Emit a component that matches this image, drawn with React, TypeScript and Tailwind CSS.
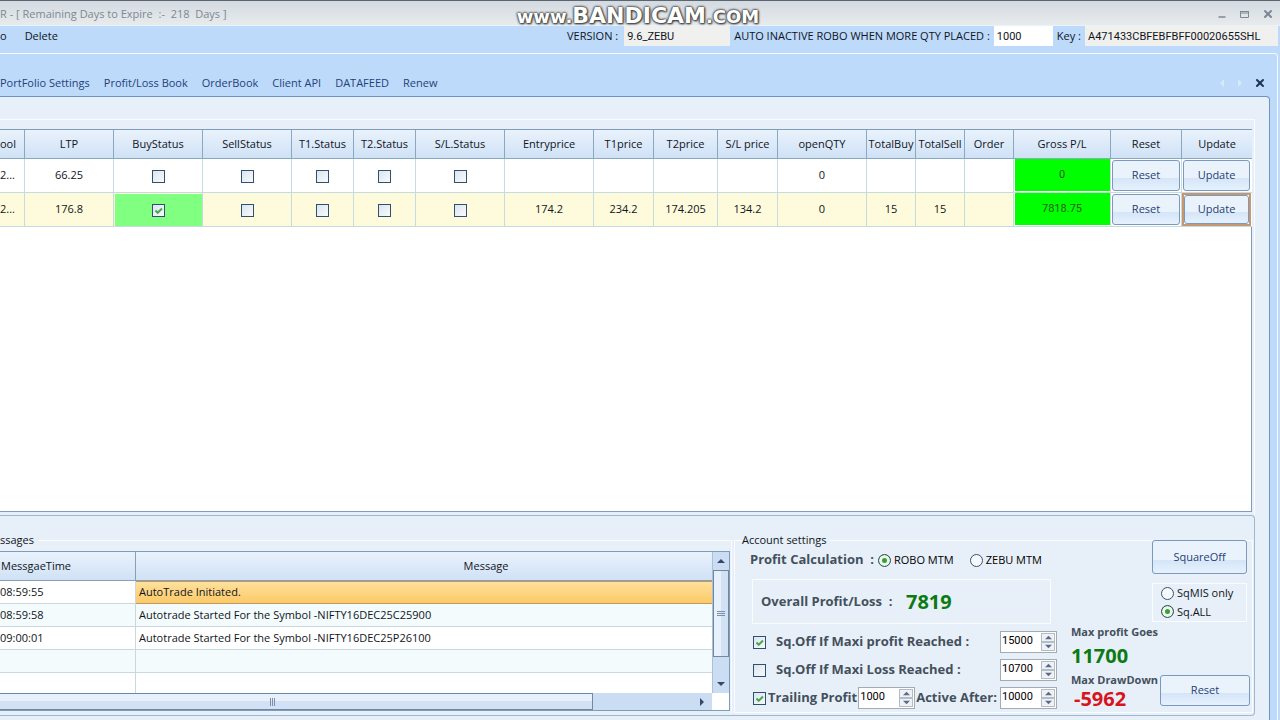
import { ReactNode } from "react";
import { Minus, X } from "lucide-react";

interface Row {
  symbol: string;
  ltp: string;
  buy: boolean;
  entry: string;
  t1: string;
  t2: string;
  sl: string;
  openQty: string;
  totalBuy: string;
  totalSell: string;
  gross: string;
  focused: boolean;
}

const TABS = [
  "PortFolio Settings",
  "Profit/Loss Book",
  "OrderBook",
  "Client API",
  "DATAFEED",
  "Renew",
];

const COLUMNS = [
  { label: "ool", width: "w-[25px]" },
  { label: "LTP", width: "w-[89px]" },
  { label: "BuyStatus", width: "w-[89px]" },
  { label: "SellStatus", width: "w-[89px]" },
  { label: "T1.Status", width: "w-[62px]" },
  { label: "T2.Status", width: "w-[62px]" },
  { label: "S/L.Status", width: "w-[89px]" },
  { label: "Entryprice", width: "w-[89px]" },
  { label: "T1price", width: "w-[60px]" },
  { label: "T2price", width: "w-[64px]" },
  { label: "S/L price", width: "w-[60px]" },
  { label: "openQTY", width: "w-[89px]" },
  { label: "TotalBuy", width: "w-[49px]" },
  { label: "TotalSell", width: "w-[49px]" },
  { label: "Order", width: "w-[49px]" },
  { label: "Gross P/L", width: "w-[97px]" },
  { label: "Reset", width: "w-[71px]" },
  { label: "Update", width: "w-[70px]" },
];

const ROWS: Row[] = [
  {
    symbol: "2...",
    ltp: "66.25",
    buy: false,
    entry: "",
    t1: "",
    t2: "",
    sl: "",
    openQty: "0",
    totalBuy: "",
    totalSell: "",
    gross: "0",
    focused: false,
  },
  {
    symbol: "2...",
    ltp: "176.8",
    buy: true,
    entry: "174.2",
    t1: "234.2",
    t2: "174.205",
    sl: "134.2",
    openQty: "0",
    totalBuy: "15",
    totalSell: "15",
    gross: "7818.75",
    focused: true,
  },
];

const MESSAGES = [
  { time: "08:59:55", text: "AutoTrade Initiated." },
  { time: "08:59:58", text: "Autotrade Started For the Symbol -NIFTY16DEC25C25900" },
  { time: "09:00:01", text: "Autotrade Started For the Symbol -NIFTY16DEC25P26100" },
  { time: "", text: "" },
  { time: "", text: "" },
];

function Arrow({ dir, className }: { dir: "up" | "down" | "left" | "right"; className: string }) {
  const points = {
    up: "0,6 4,2 8,6",
    down: "0,2 4,6 8,2",
    left: "6,0 2,4 6,8",
    right: "2,0 6,4 2,8",
  };
  return (
    <svg viewBox="0 0 8 8" className={className} fill="currentColor" aria-hidden="true">
      <polygon points={points[dir]} />
    </svg>
  );
}

function CheckBox({ id, label, checked = false }: { id?: string; label?: string; checked?: boolean }) {
  return (
    <span className="relative inline-block size-[13px] shrink-0 align-middle">
      <input
        id={id}
        type="checkbox"
        aria-label={label}
        defaultChecked={checked}
        className="peer block size-[13px] appearance-none border border-[#31506f] bg-linear-to-br from-[#dbe5ee] to-[#f8fafc]"
      />
      <svg
        viewBox="0 0 13 13"
        className="pointer-events-none absolute inset-0 hidden text-[#4ca64c] peer-checked:block"
        fill="none"
        stroke="currentColor"
        strokeWidth="2"
        aria-hidden="true"
      >
        <path d="M3.5 6.5 L5.7 8.8 L10 4.5" />
      </svg>
    </span>
  );
}

function Radio({ name, label, checked = false }: { name: string; label: string; checked?: boolean }) {
  return (
    <label className="flex items-center gap-[3px] whitespace-nowrap">
      <input
        type="radio"
        name={name}
        defaultChecked={checked}
        className="size-[13px] appearance-none rounded-full border border-[#3d5268] bg-[#f5f9fd] checked:bg-[#35a035] checked:shadow-[inset_0_0_0_3px_#eef7ee]"
      />
      {label}
    </label>
  );
}

function Spinner({ label, value }: { label: string; value: string }) {
  return (
    <div className="flex h-[22px] w-[57px] shrink-0 border border-[#a3abb5] bg-white p-px">
      <input
        aria-label={label}
        defaultValue={value}
        className="h-4 w-[39px] font-[Roboto,sans-serif] text-[11px] font-normal text-black outline-none"
      />
      <div className="flex flex-1 flex-col text-[#5d6b8c]">
        <button
          aria-label={`Increase ${label}`}
          className="flex flex-1 items-center justify-center border border-[#b4bcc6] bg-[#eef1f5]"
        >
          <Arrow dir="up" className="size-[7px]" />
        </button>
        <button
          aria-label={`Decrease ${label}`}
          className="flex flex-1 items-center justify-center border border-[#b4bcc6] bg-[#eef1f5]"
        >
          <Arrow dir="down" className="size-[7px]" />
        </button>
      </div>
    </div>
  );
}

function PushButton({ children, className }: { children: ReactNode; className: string }) {
  return (
    <button
      className={`rounded-[3px] border border-[#7b98bd] bg-linear-to-b from-[#eaf3fc] from-60% via-[#d5e5f8] via-60% to-[#e6f1fd] text-[#1e3f74] ${className}`}
    >
      {children}
    </button>
  );
}

function PositionsTable() {
  return (
    <table className="w-full table-fixed border-separate border-spacing-0 text-center">
      <thead>
        <tr className="h-[29px] bg-linear-to-b from-[#e9f2fc] to-[#cfe1f6]">
          {COLUMNS.map((col) => (
            <th
              key={col.label}
              className={`overflow-hidden border-r border-b border-[#8aa9c0] p-0 font-normal whitespace-nowrap first:text-left last:border-r-0 ${col.width}`}
            >
              {col.label}
            </th>
          ))}
        </tr>
      </thead>
      <tbody>
        {ROWS.map((row, i) => (
          <tr
            key={i}
            className={`h-[34px] *:border-r *:border-b *:border-[#c5dbe2] *:p-0 *:last:border-r-0 ${row.focused ? "bg-[#fdfbdc]" : "bg-white"}`}
          >
            <td className="text-left whitespace-nowrap">{row.symbol}</td>
            <td>{row.ltp}</td>
            <td className={row.buy ? "bg-[#80ff80] shadow-[inset_1px_1px_0_#fdfbdc]" : ""}>
              <CheckBox label="BuyStatus" checked={row.buy} />
            </td>
            {["SellStatus", "T1.Status", "T2.Status", "S/L.Status"].map((name) => (
              <td key={name}>
                <CheckBox label={name} />
              </td>
            ))}
            <td>{row.entry}</td>
            <td>{row.t1}</td>
            <td>{row.t2}</td>
            <td>{row.sl}</td>
            <td>{row.openQty}</td>
            <td>{row.totalBuy}</td>
            <td>{row.totalSell}</td>
            <td />
            <td className="bg-[#00ff00] font-[Roboto,sans-serif] text-[#28601c] shadow-[inset_1px_0_0_#fff,inset_0_-1px_0_#fff]">
              {row.gross}
            </td>
            <td className="bg-white">
              <div className="flex px-px">
                <PushButton className="h-[31px] flex-1">Reset</PushButton>
              </div>
            </td>
            <td className="bg-white">
              <div className={`mr-px flex ${row.focused ? "border-2 border-[#c8966f]" : "px-px"}`}>
                <PushButton className={row.focused ? "h-[29px] flex-1" : "h-[31px] flex-1"}>
                  Update
                </PushButton>
              </div>
            </td>
          </tr>
        ))}
      </tbody>
    </table>
  );
}

function MessageLog() {
  return (
    <div className="flex h-[160px] border-y border-r border-[#7f9db9] bg-white">
      <div className="flex min-w-0 flex-1 flex-col">
        <div className="h-[141px] overflow-hidden">
          <table className="w-full table-fixed border-separate border-spacing-0">
            <thead>
              <tr className="h-[29px] bg-linear-to-b from-[#e9f2fc] to-[#cfe1f6]">
                <th className="w-[136px] border-r border-b border-[#8aa0b0] p-0 pl-px text-left font-normal">
                  MessgaeTime
                </th>
                <th className="border-b border-[#8aa0b0] p-0 pl-[124px] font-normal">Message</th>
              </tr>
            </thead>
            <tbody>
              {MESSAGES.map((msg, i) => (
                <tr key={i} className="h-[23px] odd:bg-white even:bg-[#f3fbfd]">
                  <td className="border-r border-b border-[#c8d8de] p-0">{msg.time}</td>
                  <td
                    className={`border-b p-0 pl-[3px] whitespace-nowrap ${
                      i === 0
                        ? "border-t border-[#c09a66] bg-linear-to-b from-[#ffe09c] to-[#fcca66]"
                        : "border-[#c8d8de]"
                    }`}
                  >
                    {msg.text}
                  </td>
                </tr>
              ))}
            </tbody>
          </table>
        </div>
        {/* Horizontal scroll bar */}
        <div className="flex flex-1 items-center justify-between bg-[#cbddf2]">
          <div className="flex h-full w-[593px] justify-end border border-l-0 border-[#6d8aa5] bg-linear-to-b from-[#e8f1fb] from-50% to-[#d3e1f4] to-50%">
            <div className="flex w-[322px] items-center gap-px">
              <div className="h-2 w-px bg-[#7a8fae]" />
              <div className="h-2 w-px bg-[#7a8fae]" />
              <div className="h-2 w-px bg-[#7a8fae]" />
            </div>
          </div>
          <Arrow dir="right" className="mr-1.5 size-2 text-[#36496b]" />
        </div>
      </div>
      {/* Vertical scroll bar */}
      <div className="flex w-[17px] flex-col">
        <div className="flex h-[141px] flex-col items-center border-l border-[#a9c0da] bg-[#cbddf2] text-[#36496b]">
          <Arrow dir="up" className="my-[5px] size-2" />
          <div className="flex h-[87px] w-4 flex-col items-center justify-center gap-px border border-[#7089a0] bg-linear-to-r from-[#e8f1fb] from-50% to-[#d3e1f4] to-50%">
            <div className="h-px w-2 bg-[#7a8fae]" />
            <div className="h-px w-2 bg-[#7a8fae]" />
            <div className="h-px w-2 bg-[#7a8fae]" />
          </div>
          <Arrow dir="down" className="mt-auto mb-[5px] size-2" />
        </div>
      </div>
    </div>
  );
}

function AccountSettings() {
  return (
    <fieldset className="flex w-[519px] shrink-0 border border-[#fafcfe] pl-[15px]">
      <legend className="-ml-2 h-4 pr-1 leading-4">Account settings</legend>
      <div className="w-[307px] shrink-0 text-[13px] font-bold whitespace-nowrap text-[#44505c]">
        <div className="flex h-6 items-center">
          <span className="w-32 whitespace-pre">{"Profit Calculation  :"}</span>
          <div className="flex gap-4 text-[11px] font-normal text-black">
            <Radio name="mtm" label="ROBO MTM" checked />
            <Radio name="mtm" label="ZEBU MTM" />
          </div>
        </div>
        <div className="mt-[7px] mr-1.5 ml-0.5 flex h-[45px] items-center border border-[#fafcfe] pl-2">
          <span className="w-[145px] whitespace-pre">{"Overall Profit/Loss  :"}</span>
          <span className="text-xl text-[#0c7a12]">7819</span>
        </div>
        <div className="mt-1 flex h-7 items-center gap-2.5 pl-[3px]">
          <CheckBox id="max-profit" checked />
          <label htmlFor="max-profit" className="flex-1">
            Sq.Off If Maxi profit Reached :
          </label>
          <Spinner label="Max profit" value="15000" />
        </div>
        <div className="flex h-7 items-center gap-2.5 pl-[3px]">
          <CheckBox id="max-loss" />
          <label htmlFor="max-loss" className="flex-1">
            Sq.Off If Maxi Loss Reached :
          </label>
          <Spinner label="Max loss" value="10700" />
        </div>
        <div className="flex h-7 items-center gap-px pl-[3px]">
          <CheckBox id="trailing" checked />
          <label htmlFor="trailing" className="pl-px">
            Trailing Profit
          </label>
          <Spinner label="Trailing profit" value="1000" />
          <span className="flex-1">Active After:</span>
          <Spinner label="Active after" value="10000" />
        </div>
      </div>
      <div className="-mt-2 flex flex-1 flex-col pr-0.5 pl-3.5">
        <PushButton className="mr-[3px] h-[34px] w-[95px] self-end">SquareOff</PushButton>
        <div className="mt-[9px] mr-[3px] flex h-[39px] w-[95px] flex-col justify-around self-end border border-[#fafcfe] pl-2">
          <Radio name="square" label="SqMIS only" />
          <Radio name="square" label="Sq.ALL" checked />
        </div>
        <div className="mt-0.5 flex items-end justify-between">
          <div className="font-bold whitespace-nowrap text-[#44505c]">
            <div className="h-4 leading-4">Max profit Goes</div>
            <div className="h-8 text-xl leading-8 text-[#0c7a12]">11700</div>
            <div className="h-4 leading-4">Max DrawDown</div>
            <div className="h-[22px] pl-[3px] text-xl leading-[22px] text-[#d8141c]">-5962</div>
          </div>
          <PushButton className="mb-1 h-[31px] w-[90px]">Reset</PushButton>
        </div>
      </div>
    </fieldset>
  );
}

export default function App() {
  return (
    <div className="relative flex min-h-screen w-full flex-col overflow-hidden bg-[#bddafb] font-['Open_Sans','Noto_Sans',sans-serif] text-[11px] text-[#10151c]">
      {/* Title bar */}
      <header className="flex h-[25px] items-center justify-between border-t border-[#5d6570] bg-linear-to-b from-[#d3dae1] to-[#e8ebec] pt-0.5 pr-1.5 text-[#7f8893]">
        <span className="whitespace-pre">{"R - [ Remaining Days to Expire  :-  218  Days ]"}</span>
        <div className="flex items-center gap-[13px]">
          <button aria-label="Minimize">
            <Minus className="mt-1.5 size-2.5" strokeWidth={4} />
          </button>
          <button aria-label="Maximize">
            <svg viewBox="0 0 9 8" className="h-2 w-[9px]" fill="none" stroke="currentColor" aria-hidden="true">
              <path d="M0 1.5H9M0.5 1V7.5H8.5V1M0 3H9" />
            </svg>
          </button>
          <button aria-label="Close">
            <X className="size-3" strokeWidth={4} />
          </button>
        </div>
      </header>

      {/* Menu strip */}
      <div className="flex h-7 items-start border-t border-[#e8f3fe] whitespace-nowrap">
        <nav className="flex h-5 items-center gap-[18px]">
          <button>o</button>
          <button>Delete</button>
        </nav>
        <div className="ml-auto flex h-5 items-center">
          <label htmlFor="version" className="mr-1.5">
            VERSION :
          </label>
          <input
            id="version"
            readOnly
            defaultValue="9.6_ZEBU"
            className="mr-1 h-5 w-[106px] bg-[#f0f0ee] px-[3px] font-[Roboto,sans-serif]"
          />
          <label htmlFor="qty" className="mr-1">
            AUTO INACTIVE ROBO WHEN MORE QTY PLACED :
          </label>
          <input
            id="qty"
            defaultValue="1000"
            className="mr-1 h-5 w-[59px] bg-white px-[3px] font-[Roboto,sans-serif]"
          />
          <label htmlFor="key" className="mr-1">
            Key :
          </label>
          <input
            id="key"
            readOnly
            defaultValue="A471433CBFEBFBFF00020655SHL"
            className="mr-0.5 h-5 w-[193px] bg-[#f0f0ee] px-[3px] font-[Roboto,sans-serif]"
          />
        </div>
      </div>

      <main className="mr-0.5 flex flex-1 flex-col rounded-tr-sm border-t border-r border-[#f4f9ff] pr-[7px]">
        {/* Tabs */}
        <div className="flex h-[42px] items-end justify-between pb-[5px]">
          <nav className="flex gap-3.5 whitespace-nowrap text-[#1f4279]">
            {TABS.map((tab) => (
              <a key={tab} href="#">
                {tab}
              </a>
            ))}
          </nav>
          <div className="mr-1 flex items-center gap-2.5 pb-0.5">
            <button aria-label="Previous tab" className="text-[#d6e9fb]">
              <Arrow dir="left" className="size-2" />
            </button>
            <button aria-label="Next tab" className="text-[#d6e9fb]">
              <Arrow dir="right" className="size-2" />
            </button>
            <button aria-label="Close tab" className="text-[#1d3557]">
              <X className="size-3" strokeWidth={4} />
            </button>
          </div>
        </div>

        {/* Page */}
        <div className="flex flex-1 flex-col rounded-tr-sm border-t border-r border-[#7292ba] bg-[#e7eff8] pt-[22px] pr-3.5">
          <div className="flex flex-1 flex-col border-t border-r border-[#fafcfe] pt-[9px] pr-0.5">
            <div className="flex-1 border-y border-r border-[#7f9db9] bg-white">
              <PositionsTable />
            </div>
            <div className="h-[3px]" />
          </div>
          <div className="mb-1 flex h-[201px] gap-0.5 rounded-r-sm border-y border-r border-[#9db8cf] pt-4 pr-px pb-0.5">
            <fieldset className="min-w-0 flex-1 border-t border-r border-[#fafcfe] pr-px">
              <legend className="h-4 pr-1 leading-4">ssages</legend>
              <div className="pt-[3px]">
                <MessageLog />
              </div>
            </fieldset>
            <AccountSettings />
          </div>
        </div>
      </main>

      {/* Recorder watermark */}
      <div className="pointer-events-none absolute inset-x-0 top-1 flex items-baseline justify-center pr-1 font-['DejaVu_Sans',sans-serif] leading-6 font-bold text-white [text-shadow:0_0_2px_#444,0_0_2px_#444,0_0_3px_#444,1px_1px_2px_#444]">
        <span className="text-lg leading-6">www.</span>
        <span className="text-[22px] leading-6">BANDICAM</span>
        <span className="text-lg leading-6">.COM</span>
      </div>
    </div>
  );
}
